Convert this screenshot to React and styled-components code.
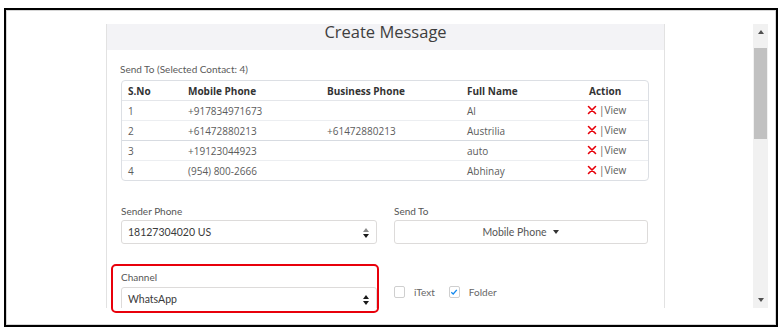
import React from 'react'
import styled, { createGlobalStyle } from 'styled-components'

const GlobalStyle = createGlobalStyle`
    body {
        margin: 0;
        background: #fff;
        font-family: Lato, "Open Sans", sans-serif;
    }
`

const contacts = [
    { sno: 1, mobile: '+917834971673', business: '', name: 'Al' },
    { sno: 2, mobile: '+61472880213', business: '+61472880213', name: 'Austrilia' },
    { sno: 3, mobile: '+19123044923', business: '', name: 'auto' },
    { sno: 4, mobile: '(954) 800-2666', business: '', name: 'Abhinay' },
]

const Frame = styled.div`
    position: relative;
    box-sizing: border-box;
    width: 774px;
    height: 319px;
    margin: 8px 0 0 4px;
    border: 2px solid #000;
`

const Inner = styled.div`
    box-sizing: border-box;
    height: 100%;
    border: 1px solid #d6d6d6;
    padding-top: 13px;
`

const Viewport = styled.div`
    display: flex;
    height: 284px;
`

const Main = styled.div`
    flex: 1;
    padding-left: 99px;
`

const Panel = styled.div`
    box-sizing: border-box;
    width: 559px;
    height: 100%;
    clip-path: inset(-12px -12px 0 -12px);
    border-left: 1px solid #e2e2e2;
    border-right: 1px solid #e2e2e2;
`

const Header = styled.div`
    height: 26px;
    background: #f3f3f6;
    text-align: center;
    font-family: "Open Sans", sans-serif;
    font-size: 16.5px;
    line-height: 16px;
    color: #3e3e3e;
`

const Body = styled.div`
    padding: 13px 0 0 14px;
`

const Caption = styled.div`
    font-size: 10px;
    line-height: 12px;
    color: #5a5a5a;
    margin-left: -1px;
`

const Table = styled.table`
    width: 528px;
    margin-top: 5px;
    border: 1px solid #dcdfe4;
    border-radius: 4px;
    border-spacing: 0;
    border-collapse: separate;
    table-layout: fixed;
    font-family: "Open Sans", sans-serif;
    font-size: 10px;
`

const Th = styled.th`
    height: 19px;
    padding: 0 0 0 ${p => p.$pad || 6}px;
    text-align: left;
    font-weight: 700;
    color: #333;
    border-bottom: 1px solid #e4e6ea;
`

const Td = styled.td`
    height: 19px;
    padding: 0 0 0 6px;
    color: #5c5c5c;
    white-space: nowrap;
    tr + tr > & {
        border-top: 1px solid ${p => (p.$strong ? '#d7dbe1' : '#eceef1')};
    }
`

const ActionCell = styled.span`
    display: inline-flex;
    align-items: center;
    gap: 2px;
    color: #5c5c5c;
`

const FormGrid = styled.div`
    display: grid;
    grid-template-columns: 256px 254px;
    column-gap: 17px;
    row-gap: 27px;
    margin-top: 24px;
`

const Field = styled.div`
    display: flex;
    flex-direction: column;
    gap: ${p => p.$gap || 3}px;
`

const Label = styled.label`
    font-size: 10px;
    line-height: 12px;
    color: #555;
`

const SelectBox = styled.div`
    box-sizing: border-box;
    height: 24px;
    display: flex;
    align-items: center;
    justify-content: ${p => (p.$center ? 'center' : 'space-between')};
    gap: 6px;
    padding: 0 7px 0 6px;
    border: 1px solid #dddbda;
    border-radius: 3px;
    background: #fff;
    font-size: 10.5px;
    color: #3a3a3a;
`

const ButtonText = styled.span`
    color: #555;
`

const Spinner = styled.span`
    display: flex;
    flex-direction: column;
    gap: 2px;
    margin-top: 2px;
`

const Tri = styled.span`
    width: 0;
    height: 0;
    border-left: 3px solid transparent;
    border-right: 3px solid transparent;
    ${p => (p.$up ? 'border-bottom' : 'border-top')}: 4px solid ${p => p.$color || '#1a1a1a'};
`

const CheckRow = styled.div`
    align-self: end;
    display: flex;
    align-items: center;
    gap: 9px;
    margin-bottom: 13px;
    font-size: 10px;
    color: #666;
`

const Check = styled.span`
    box-sizing: border-box;
    width: 11px;
    height: 12px;
    border: 1px solid #cfcfcf;
    border-radius: 2px;
    background: #fff;
    display: inline-flex;
    align-items: center;
    justify-content: center;
    margin-left: ${p => p.$ml || 0}px;
`

const Scrollbar = styled.div`
    width: 15px;
    margin-right: 7px;
    background: #f1f1f1;
    display: flex;
    flex-direction: column;
`

const ScrollButton = styled.div`
    height: 16px;
    display: flex;
    align-items: center;
    justify-content: center;
`

const Thumb = styled.div`
    height: 91px;
    margin: 8px 1px 0 1px;
    background: #c1c1c1;
`

const Spacer = styled.div`
    flex: 1;
`

const Highlight = styled.div`
    position: absolute;
    left: 105px;
    top: 254px;
    width: 268px;
    height: 49px;
    box-sizing: border-box;
    border: 2px solid #e8000b;
    border-radius: 5px;
    pointer-events: none;
`

const DeleteIcon = () => (
    <svg width="10" height="10" viewBox="0 0 10 10">
        <path d="M1.5 1.5 L8.5 8.5 M8.5 1.5 L1.5 8.5" stroke="#e6000a" strokeWidth="1.6" strokeLinecap="round" />
    </svg>
)

const Tick = () => (
    <svg width="8" height="8" viewBox="0 0 8 8">
        <path d="M1.3 4.3 L3.2 6 L6.8 1.8" stroke="#1589ee" strokeWidth="1.3" fill="none" />
    </svg>
)

export default function App() {
    return (
        <>
            <GlobalStyle />
            <Frame>
                <Inner>
                    <Viewport>
                        <Main>
                            <Panel>
                                <Header>Create Message</Header>
                                <Body>
                                    <Caption>Send To (Selected Contact: 4)</Caption>
                                    <Table>
                                        <colgroup>
                                            <col style={{ width: 60 }} />
                                            <col style={{ width: 139 }} />
                                            <col style={{ width: 140 }} />
                                            <col style={{ width: 120 }} />
                                            <col />
                                        </colgroup>
                                        <thead>
                                            <tr>
                                                <Th>S.No</Th>
                                                <Th>Mobile Phone</Th>
                                                <Th>Business Phone</Th>
                                                <Th>Full Name</Th>
                                                <Th $pad={8}>Action</Th>
                                            </tr>
                                        </thead>
                                        <tbody>
                                            {contacts.map(c => (
                                                <tr key={c.sno}>
                                                    <Td $strong={c.sno === 3}>{c.sno}</Td>
                                                    <Td $strong={c.sno === 3}>{c.mobile}</Td>
                                                    <Td $strong={c.sno === 3}>{c.business}</Td>
                                                    <Td $strong={c.sno === 3}>{c.name}</Td>
                                                    <Td $strong={c.sno === 3}>
                                                        <ActionCell><DeleteIcon />|View</ActionCell>
                                                    </Td>
                                                </tr>
                                            ))}
                                        </tbody>
                                    </Table>

                                    <FormGrid>
                                        <Field>
                                            <Label>Sender Phone</Label>
                                            <SelectBox>
                                                18127304020 US
                                                <Spinner><Tri $up $color="#8a8a8a" /><Tri /></Spinner>
                                            </SelectBox>
                                        </Field>
                                        <Field>
                                            <Label>Send To</Label>
                                            <SelectBox $center>
                                                <ButtonText>Mobile Phone</ButtonText>
                                                <Tri $color="#333" />
                                            </SelectBox>
                                        </Field>
                                        <Field $gap={4}>
                                            <Label>Channel</Label>
                                            <SelectBox>
                                                WhatsApp
                                                <Spinner><Tri $up /><Tri /></Spinner>
                                            </SelectBox>
                                        </Field>
                                        <CheckRow>
                                            <Check />
                                            iText
                                            <Check $ml={5}><Tick /></Check>
                                            Folder
                                        </CheckRow>
                                    </FormGrid>
                                </Body>
                            </Panel>
                        </Main>
                        <Scrollbar>
                            <ScrollButton><Tri $up $color="#505050" /></ScrollButton>
                            <Thumb />
                            <Spacer />
                            <ScrollButton><Tri $color="#505050" /></ScrollButton>
                        </Scrollbar>
                    </Viewport>
                </Inner>
                <Highlight />
            </Frame>
        </>
    )
}
